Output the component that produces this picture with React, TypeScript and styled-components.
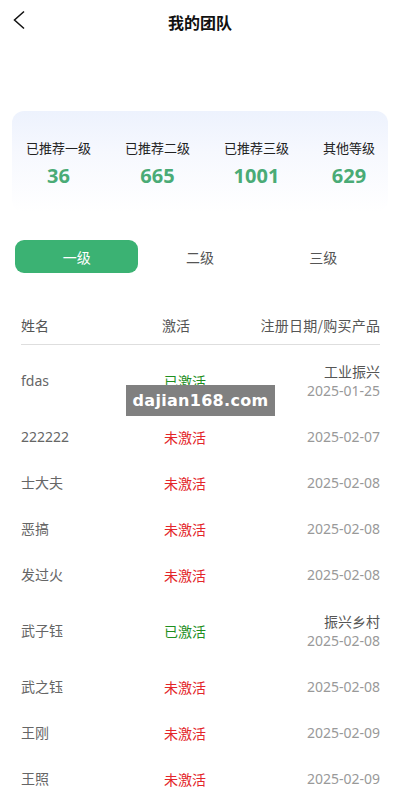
import React from "react";
import styled, { createGlobalStyle } from "styled-components";

const Global = createGlobalStyle`
  html, body { margin: 0; padding: 0; background: #fff; }
  body { font-family: "Noto Sans", "Noto Sans CJK SC", sans-serif; }
  * { box-sizing: border-box; }
`;

const Page = styled.div`
  width: 400px;
  min-height: 800px;
  position: relative;
  background: #fff;
  overflow: hidden;
`;

const Header = styled.div`
  height: 44px;
  display: flex;
  align-items: center;
  justify-content: center;
  position: relative;
`;

const BackBtn = styled.div`
  position: absolute;
  left: 12px;
  top: 9px;
  width: 16px;
  height: 22px;
  display: flex;
`;

const Title = styled.h1`
  margin: 0;
  font-size: 16px;
  font-weight: 700;
  color: #111;
  font-family: "Noto Sans CJK SC", sans-serif;
  line-height: 44px;
`;

const StatsCard = styled.div`
  margin: 67px 12px 0;
  height: 101px;
  border-radius: 12px;
  background: linear-gradient(180deg, #edf2fd 0%, #f6f8fe 40%, #ffffff 100%);
  display: flex;
  justify-content: space-between;
  align-items: flex-start;
  padding: 27px 13px 0 14px;
`;

const Stat = styled.div`
  display: flex;
  flex-direction: column;
  align-items: center;
`;

const StatLabel = styled.div`
  font-family: "Noto Sans CJK SC", sans-serif;
  font-size: 13px;
  line-height: 20px;
  color: #222;
`;

const StatValue = styled.div`
  font-family: "Noto Sans", "Noto Sans CJK SC", sans-serif;
  font-size: 20px;
  font-weight: 700;
  line-height: 28px;
  margin-top: 4px;
  color: #4aab76;
`;

const Tabs = styled.div`
  margin: 28px 15px 0;
  display: grid;
  grid-template-columns: repeat(3, 1fr);
  height: 33px;
`;

const Tab = styled.div<{ $active?: boolean }>`
  display: flex;
  align-items: center;
  justify-content: center;
  border-radius: 9px;
  font-family: "Noto Sans CJK SC", sans-serif;
  font-size: 14px;
  color: ${(p) => (p.$active ? "#fff" : "#555")};
  background: ${(p) => (p.$active ? "#3bb273" : "transparent")};
`;

const Table = styled.div`
  margin: 40px 20px 0 21px;
`;

const HeadRow = styled.div`
  display: grid;
  grid-template-columns: 141px 1fr auto;
  align-items: center;
  height: 32px;
  padding-bottom: 8px;
  border-bottom: 1px solid #dedede;
  font-family: "Noto Sans CJK SC", sans-serif;
  font-size: 14px;
  color: #555;
`;

const HeadRight = styled.div`
  text-align: right;
  letter-spacing: 0.25px;
  margin-right: -0.25px;
`;

const Body = styled.div`
  padding-top: 3px;
`;

const Row = styled.div`
  display: grid;
  grid-template-columns: 142px 1fr auto;
  align-items: center;
  padding: 13px 0;
`;

const Name = styled.div`
  font-family: "Noto Sans", "Noto Sans CJK SC", sans-serif;
  font-size: 14px;
  line-height: 20px;
  color: #666;
`;

const Status = styled.div<{ $on: boolean }>`
  font-family: "Noto Sans CJK SC", sans-serif;
  font-size: 14px;
  line-height: 20px;
  padding-left: 1px;
  color: ${(p) => (p.$on ? "#1f8f1f" : "#e3262a")};
`;

const Right = styled.div`
  display: flex;
  flex-direction: column;
  align-items: flex-end;
`;

const Product = styled.div`
  font-family: "Noto Sans CJK SC", sans-serif;
  font-size: 14px;
  line-height: 20px;
  color: #555;
`;

const DateText = styled.div`
  font-family: "Noto Sans", sans-serif;
  font-size: 14px;
  line-height: 20px;
  color: #999;
`;

const Watermark = styled.div`
  position: absolute;
  left: 126px;
  top: 385px;
  width: 149px;
  height: 31px;
  background: #808080;
  color: #fff;
  font-family: "DejaVu Sans", sans-serif;
  font-weight: 700;
  font-size: 16px;
  display: flex;
  align-items: center;
  justify-content: center;
  letter-spacing: 0.3px;
`;

const stats = [
  { label: "已推荐一级", value: "36" },
  { label: "已推荐二级", value: "665" },
  { label: "已推荐三级", value: "1001" },
  { label: "其他等级", value: "629" },
];

const rows: { name: string; on: boolean; product?: string; date: string }[] = [
  { name: "fdas", on: true, product: "工业振兴", date: "2025-01-25" },
  { name: "222222", on: false, date: "2025-02-07" },
  { name: "士大夫", on: false, date: "2025-02-08" },
  { name: "恶搞", on: false, date: "2025-02-08" },
  { name: "发过火", on: false, date: "2025-02-08" },
  { name: "武子钰", on: true, product: "振兴乡村", date: "2025-02-08" },
  { name: "武之钰", on: false, date: "2025-02-08" },
  { name: "王刚", on: false, date: "2025-02-09" },
  { name: "王照", on: false, date: "2025-02-09" },
];

export default function App() {
  return (
    <Page>
      <Global />
      <Header>
        <BackBtn>
          <svg width="16" height="22" viewBox="0 0 16 22">
            <polyline points="12,2.5 2.5,11 12,19.5" fill="none" stroke="#111" strokeWidth="1.5" />
          </svg>
        </BackBtn>
        <Title>我的团队</Title>
      </Header>
      <StatsCard>
        {stats.map((s) => (
          <Stat key={s.label}>
            <StatLabel>{s.label}</StatLabel>
            <StatValue>{s.value}</StatValue>
          </Stat>
        ))}
      </StatsCard>
      <Tabs>
        <Tab $active>一级</Tab>
        <Tab>二级</Tab>
        <Tab>三级</Tab>
      </Tabs>
      <Table>
        <HeadRow>
          <div>姓名</div>
          <div>激活</div>
          <HeadRight>注册日期/购买产品</HeadRight>
        </HeadRow>
        <Body>
          {rows.map((r, i) => (
            <Row key={i}>
              <Name>{r.name}</Name>
              <Status $on={r.on}>{r.on ? "已激活" : "未激活"}</Status>
              <Right>
                {r.product && <Product>{r.product}</Product>}
                <DateText>{r.date}</DateText>
              </Right>
            </Row>
          ))}
        </Body>
      </Table>
      <Watermark>dajian168.com</Watermark>
    </Page>
  );
}
